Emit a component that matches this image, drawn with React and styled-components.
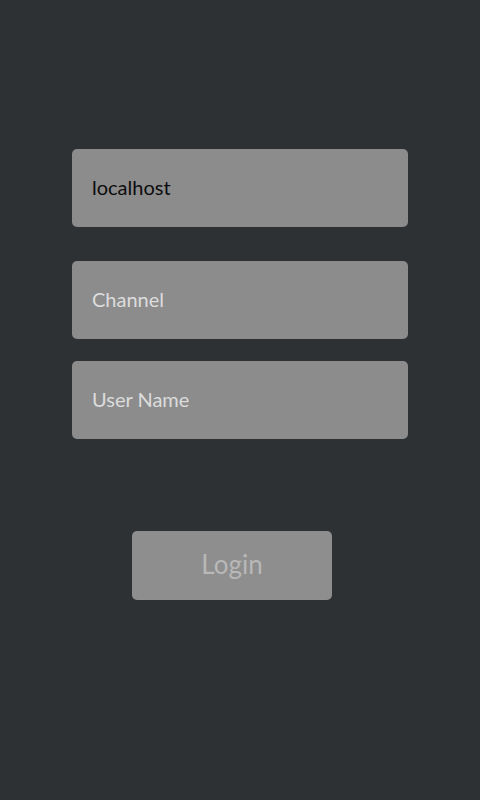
import React from "react";
import styled, { createGlobalStyle } from "styled-components";

const GlobalStyle = createGlobalStyle`
  html, body {
    margin: 0;
    padding: 0;
    background: #2e3134;
    font-family: Lato, "Open Sans", sans-serif;
  }
`;

const Page = styled.div`
  width: 480px;
  height: 800px;
  background: #2e3134;
  display: flex;
  flex-direction: column;
  align-items: center;
  padding-top: 149px;
  box-sizing: border-box;
`;

const Form = styled.form`
  display: flex;
  flex-direction: column;
  align-items: center;
  width: 336px;
`;

const Field = styled.input`
  width: 336px;
  height: 78px;
  box-sizing: border-box;
  margin-top: ${(p) => p.$gap || 0}px;
  padding: 0 20px 2px;
  border: none;
  border-radius: 5px;
  background: #8c8c8c;
  color: #0c0c0c;
  font-family: Lato, "Open Sans", sans-serif;
  font-size: 20px;
  outline: none;

  &::placeholder {
    color: #dcdcdc;
  }
`;

const LoginButton = styled.button`
  margin: 92px 16px 0 0;
  width: 200px;
  height: 69px;
  padding: 0 0 3px;
  border: none;
  border-radius: 5px;
  background: #8e8e8e;
  color: #b8b8b8;
  font-family: Lato, "Open Sans", sans-serif;
  font-size: 26px;
  cursor: default;
`;

export default function App() {
  return (
    <>
      <GlobalStyle />
      <Page>
        <Form onSubmit={(e) => e.preventDefault()}>
          <Field defaultValue="localhost" />
          <Field $gap={34} placeholder="Channel" />
          <Field $gap={22} placeholder="User Name" />
          <LoginButton disabled>Login</LoginButton>
        </Form>
      </Page>
    </>
  );
}
